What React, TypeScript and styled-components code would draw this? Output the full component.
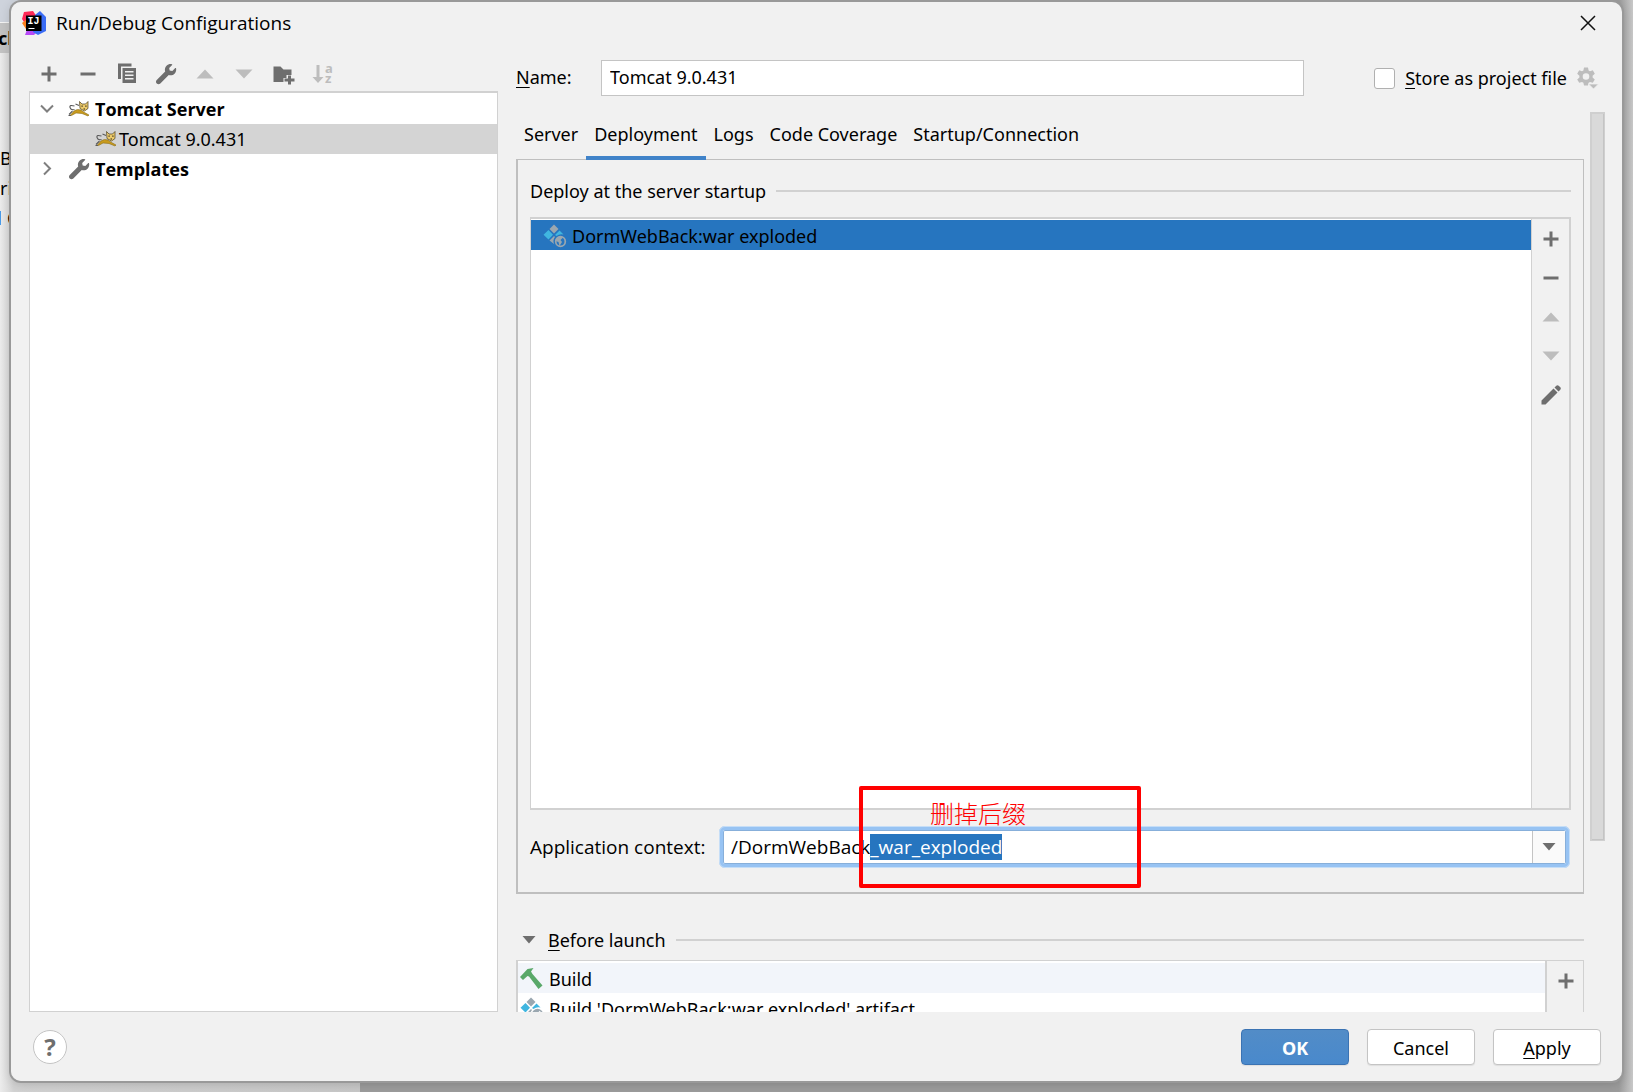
import React, { useEffect, useRef, useState } from 'react';
import styled, { createGlobalStyle, css } from 'styled-components';

const plainFont = '"Noto Sans", "Noto Sans CJK SC", sans-serif';
const headFont = '"Open Sans", "Noto Sans CJK SC", sans-serif';

const GlobalStyle = createGlobalStyle`
  *, *::before, *::after { box-sizing: border-box; }
  body {
    margin: 0;
    background: #929292;
    color: #000;
    font: 18px/30px ${plainFont};
  }
  button, input { font: inherit; color: inherit; }
  button { padding: 0; border: 0; background: none; cursor: pointer; }
  h1, h2 { margin: 0; font: inherit; }
  ul { margin: 0; padding: 0; list-style: none; }
  u { text-decoration-thickness: 1px; text-underline-offset: 3px; }
`;

const line = '#d1d1d1';
const ink = '#6e6e6e';
const faded = '#bdbdbd';
const accent = '#2675bf';

const Desktop = styled.div`
  position: relative;
  display: flex;
  min-height: 100vh;
  overflow: hidden;
  background: linear-gradient(90deg, #9c9c9c calc(100% - 14px), #c8c8c8);
`;

const ProjectWindow = styled.div`
  width: 360px;
  background: linear-gradient(90deg, #ececec, #d2d2d2 14px, #c8c8c8);
`;

const ProjectHeader = styled.div`
  height: 23px;
  background: #ced3dc;
  border-bottom: 1px solid #f4f4f4;
`;

const ProjectLine = styled.div<{ $active?: boolean; $marked?: boolean; $gap?: number }>`
  display: flex;
  height: 30px;
  margin-top: ${(p) => p.$gap ?? 0}px;
  gap: 6px;
  ${(p) => p.$active && css`background: #c3c3c3; font-weight: 700; text-indent: -2px;`}
  ${(p) => p.$marked && css`&::before { content: ''; width: 1px; height: 14px; margin-top: 8px; background: #4a9be8; }`}
`;

const Dialog = styled.main`
  position: absolute;
  inset: 2px 11px 11px;
  display: flex;
  flex-direction: column;
  overflow: hidden;
  border-radius: 10px;
  background: #f1f1f1;
`;

const DialogShadow = styled.div`
  position: absolute;
  inset: 2px 11px 11px;
  border-radius: 10px;
  box-shadow: 0 0 0 2px #999, 0 2px 12px rgba(0, 0, 0, 0.2);
`;

const TitleBar = styled.header`
  display: flex;
  align-items: center;
  height: 42px;
  padding: 0 22px 0 11px;
  gap: 10px;
  font-family: ${headFont};
  font-size: 19px;
  h1 { flex: 1; }
`;

const Body = styled.div`
  display: grid;
  grid-template-columns: 469px minmax(0, 1fr);
  grid-template-rows: minmax(0, 1fr);
  gap: 18px;
  flex: 1;
  min-height: 0;
  padding: 14px 17px 0 18px;
`;

const Column = styled.section`
  display: flex;
  flex-direction: column;
  min-height: 0;
`;

const Toolbar = styled.div`
  display: flex;
  align-items: center;
  gap: 15px;
  height: 33px;
  padding: 0 0 2px 8px;
`;

const IconButton = styled.button`
  display: flex;
  align-items: center;
  justify-content: center;
  width: 24px;
  height: 24px;
  flex: none;
`;

const Tree = styled.ul`
  flex: 1;
  padding-top: 1px;
  border: 1px solid ${line};
  border-top-width: 2px;
  background: #fff;
`;

const TreeRow = styled.li<{ $group?: boolean; $selected?: boolean }>`
  display: flex;
  align-items: center;
  height: 30px;
  padding-left: ${(p) => (p.$group ? 5 : 64)}px;
  gap: ${(p) => (p.$group ? 4 : 1)}px;
  font-family: ${(p) => (p.$group ? headFont : plainFont)};
  font-weight: ${(p) => (p.$group ? 700 : 400)};
  background: ${(p) => (p.$selected ? '#d4d4d4' : 'transparent')};
  button { margin-right: 4px; }
`;

const NameRow = styled.div`
  display: flex;
  align-items: center;
  height: 36px;
  margin: 2px 5px 16px 0;
`;

const NameLabel = styled.label`
  width: 85px;
  padding-bottom: 2px;
`;

const NameInput = styled.input`
  flex: 1;
  min-width: 0;
  height: 36px;
  margin-right: 70px;
  padding: 0 8px 2px;
  border: 1px solid #c4c4c4;
  background: #fff;
`;

const StoreLabel = styled.label`
  display: flex;
  align-items: center;
  gap: 10px;
  margin-right: 9px;
`;

const CheckBox = styled.input`
  appearance: none;
  width: 21px;
  height: 21px;
  margin: 0;
  border: 1px solid #b0b0b0;
  border-radius: 3px;
  background: #fff;
`;

const ScrollPane = styled.div`
  display: grid;
  grid-template-columns: minmax(0, 1fr) 15px;
  grid-template-rows: minmax(0, 1fr);
  gap: 6px;
  flex: 1;
  min-height: 0;
  overflow: hidden;
`;

const ScrollThumb = styled.div`
  height: 81%;
  border: 1px solid #cfcfcf;
  border-width: 2px 1px 1px 2px;
  box-shadow: inset -1px -1px #c4c4c4;
  background: #d9d9d9;
`;

const Tabs = styled.div`
  position: relative;
  display: flex;
  margin-bottom: -1px;
`;

const Tab = styled.button<{ $active: boolean }>`
  height: 48px;
  padding: 0 8px;
  border-bottom: 4px solid ${(p) => (p.$active ? '#4083c9' : 'transparent')};
`;

const Pane = styled.div`
  padding: 16px 12px 24px;
  border: 1px solid #bfbfbf;
  border-left-width: 2px;
  border-bottom-width: 2px;
`;

const SectionHead = styled.div<{ $top?: number }>`
  display: flex;
  align-items: center;
  height: 30px;
  margin-top: ${(p) => p.$top ?? 0}px;
  gap: 10px;
  &::after { content: ''; flex: 1; height: 2px; background: ${line}; }
`;

const DeployBox = styled.div`
  display: flex;
  height: 593px;
  margin-top: 11px;
  border: 2px solid ${line};
  border-left-width: 1px;
`;

const List = styled.ul`
  flex: 1;
  padding-top: 1px;
  background: #fff;
`;

const ListRow = styled.li<{ $tone?: string; $inset?: number }>`
  display: flex;
  align-items: center;
  height: 30px;
  padding: 2px 0 0 ${(p) => p.$inset ?? 12}px;
  gap: 5px;
  background: ${(p) => p.$tone ?? 'transparent'};
`;

const SideBar = styled.div<{ $ruled?: boolean }>`
  display: flex;
  flex-direction: column;
  align-items: center;
  gap: 15px;
  width: ${(p) => (p.$ruled ? 38 : 36)}px;
  padding: 8px 0 0 1px;
  border-left: ${(p) => (p.$ruled ? 1 : 0)}px solid ${line};
`;

const ContextRow = styled.div`
  display: flex;
  align-items: center;
  margin-top: 16px;
  font-family: ${headFont};
  font-size: 19px;
`;

const ContextLabel = styled.label`
  width: 189px;
`;

const Combo = styled.div`
  position: relative;
  display: flex;
  flex: 1;
  height: 42px;
  margin-right: 1px;
  border: 4px solid #97c3f3;
  border-radius: 6px;
  outline: 1px solid #c6def7;
  outline-offset: -1px;
  background: #fff;
  box-shadow: inset 0 0 0 1px #87afda;
`;

const ComboInput = styled.input`
  flex: 1;
  min-width: 0;
  margin: 1px 0;
  padding: 0 8px;
  border: 0;
  outline: 0;
  background: none;
  line-height: 26px;
  &::selection { background: ${accent}; color: #fff; }
`;

const ComboArrow = styled.button`
  display: flex;
  align-items: center;
  justify-content: center;
  width: 33px;
  margin: 1px;
  border-left: 1px solid #c4c4c4;
  background: #fafafa;
`;

const Callout = styled.div`
  position: absolute;
  top: -44px;
  left: 136px;
  width: 282px;
  height: 102px;
  padding: 5px 0 0 67px;
  border: 4px solid #ff0000;
  border-radius: 2px;
  color: #ff0000;
  font: 300 24px/36px "Noto Sans CJK SC", sans-serif;
  pointer-events: none;
`;

const Disclosure = styled.button`
  display: flex;
  align-items: center;
  gap: 7px;
  padding-left: 1px;
`;

const LaunchBox = styled.div`
  display: flex;
  height: 150px;
  margin-top: 5px;
  border: 1px solid ${line};
  border-left-width: 2px;
`;

const LaunchList = styled(List)`
  padding-top: 2px;
  border-right: 2px solid ${line};
`;

const Footer = styled.footer`
  display: flex;
  align-items: center;
  gap: 18px;
  height: 69px;
  padding: 0 21px 0 22px;
`;

const HelpButton = styled.button`
  width: 34px;
  height: 34px;
  margin-right: auto;
  border: 1px solid #c4c4c4;
  border-radius: 50%;
  background: #fff;
  color: ${ink};
  font-size: 24px;
  font-weight: 700;
`;

const ActionButton = styled.button<{ $primary?: boolean }>`
  width: 108px;
  height: 36px;
  padding-top: 2px;
  border: 1px solid #c4c4c4;
  border-radius: 4px;
  background: #fff;
  box-shadow: 0 1px 1px rgba(0, 0, 0, 0.08);
  ${(p) => p.$primary && css`
    border-color: #3b73b3;
    background: linear-gradient(#528cc7, #4989cc);
    color: #fff;
    font-weight: 700;
  `}
`;

const wrench =
  'M507.73 109.1c-2.24-9.03-13.54-12.09-20.12-5.51l-74.36 74.36-67.88-11.31-11.31-67.88 74.36-74.36c6.62-6.62 3.43-17.9-5.66-20.16-47.38-11.74-99.55.91-136.58 37.93-39.64 39.64-50.55 97.1-34.05 147.2L18.74 402.76c-24.99 24.99-24.99 65.51 0 90.5 24.99 24.99 65.51 24.99 90.5 0l213.21-213.21c50.12 16.71 107.47 5.68 147.37-34.22 37.07-37.07 49.7-89.32 37.91-136.73z';

const glyphs = {
  add: <path fill={ink} d="M10.5 4.5h3v6h6v3h-6v6h-3v-6h-6v-3h6z" />,
  remove: <path fill={ink} d="M4.5 10.5h15v3h-15z" />,
  copy: (
    <>
      <path fill={ink} d="M3 1.5h13.5v3H6V17H3z" />
      <path fill={ink} fillRule="evenodd" d="M7.5 6H21v15H7.5zM10 9v1.500h8.500V9zM10 12.500V14h8.500v-1.500zM10 16v1.500h8.500V16z" />
    </>
  ),
  wrench: <path fill={ink} transform="translate(2 2) scale(.0395)" d={wrench} />,
  up: <path fill={faded} d="M12 7.500 20.500 16.500h-17z" />,
  down: <path fill={faded} d="M3.500 7.500h17L12 16.500z" />,
  folder: (
    <>
      <path fill={ink} d="M2.500 4.500h7l3 3h8V13h-5v3h-3v4h-10z" />
      <path fill={ink} d="M17 13.500h3v3h3.500v3H20v3h-3v-3h-3.500v-3H17z" />
    </>
  ),
  sort: (
    <>
      <path fill={faded} d="M6.500 3h3v12h4L8 21l-5.500-6h4z" />
      <text x="15" y="11" fill={faded} fontSize="13" fontWeight="700">a</text>
      <text x="15" y="21" fill={faded} fontSize="13" fontWeight="700">z</text>
    </>
  ),
  pencil: <path fill={ink} d="m15.500 4.500 1.800-1.800c.7-.7 1.700-.7 2.400 0l1.600 1.600c.7.7.7 1.700 0 2.400l-1.800 1.800zM14.500 5.500l4 4L6.500 21.500H2.500v-4z" />,
  hammer: <path fill="#59a869" d="M0 10 7.500 2l6-1-2.500 3.500 1.500 2.500L22.500 18.500 18.500 22 9 9.500l-1.500-.5L3 13z" />,
  artifact: (
    <>
      <path fill="#9aa7b0" d="m11 .5 4.500 4.500L11 9.500 6.500 5z" />
      <path fill="#40b6e0" d="m5.500 6 4.500 4.800-4.500 4.700L.5 10.800zM16.500 6.500 20.500 10.500q-4-1-7 1.500l-1.500-1z" />
      <path fill="#9aa7b0" d="m11 12 1 1q-2.500 3-1 7L6.500 16.500z" />
      <circle cx="17.500" cy="17.500" r="4.800" fill="none" stroke="#9aa7b0" strokeWidth="1.700" />
      <path fill="#9aa7b0" d="M13 15q4-4 7-1.500l-2.500 2.500 1.500 2-2.500 4-1-4-3-1z" />
    </>
  ),
  tomcat: (
    <>
      <path fill="none" stroke="#5a5a5a" strokeWidth="1.100" d="M2 17.500 5.500 14M7.500 9Q2 7.500 3 10.500t4.500 2M12 8.500 8.500 7M1.500 18.500h2.500" />
      <path fill="#c99b1d" stroke="#8a6c14" strokeWidth=".6" d="M3.500 18 7 14Q10 11.500 14 13l3.500 2.500 4.500 2.500-1 1-6-2.500L9 16l-4.500 2.500z" />
      <path fill="#edcb6b" stroke="#4a3d1c" strokeWidth=".7" d="m12.500 4.500 2.500 2.500h3.500L21 4.500v7L17.500 14 13 11.500z" />
      <path fill="#2c2718" d="M14.500 8.500h1.200v1.200h-1.200zM18.300 8.500h1.200v1.200h-1.200zM16.500 11.500h1.500v1h-1.500z" />
    </>
  ),
  chevronDown: <path fill="none" stroke="#7f7f7f" strokeWidth="2" d="m6 8.500 6 6 6-6" />,
  chevronRight: <path fill="none" stroke="#7f7f7f" strokeWidth="2" d="m9 5.500 6 6-6 6" />,
  close: <path fill="none" stroke="#111" strokeWidth="1.500" d="m5 5 14 14M19 5 5 19" />,
  gear: (
    <>
      <path
        fill={faded}
        fillRule="evenodd"
        d="M8 1.500h4l.6 2.900 1.400.8 2.800-.9 2 3.400-2.200 2v1.700l2.200 2-2 3.400-2.800-.9-1.400.8L12 19.500H8l-.6-2.800-1.400-.8-2.800.9-2-3.400 2.200-2V9.700l-2.200-2 2-3.400 2.800.9 1.400-.8zM10 7.200a3.300 3.300 0 1 0 0 6.600 3.300 3.300 0 0 0 0-6.600z"
      />
      <path fill={faded} stroke="#f1f1f1" strokeWidth=".8" d="M12.500 18h10l-5 5z" />
    </>
  ),
  dropDown: <path fill={ink} d="M5.500 8h13L12 15.500z" />,
  idea: (
    <>
      <path fill="#fe2857" d="M2 1 11 0l4 6L4 14 0 8z" />
      <path fill="#fc801d" d="M0 12l5-4 3 12-4-2z" />
      <path fill="#b74af7" d="M3 24l3-8 10 4-4 4z" />
      <path fill="#3a6cf5" d="m13 4 5-4 6 6v14l-8 4-5-3z" />
      <path fill="#000" d="M4 4.500h15.500V20H4z" />
      <path fill="#fff" d="M6.500 17h6v1h-6z" />
      <text x="5.500" y="13" fill="#fff" fontSize="10" fontWeight="700" fontFamily="Liberation Mono">IJ</text>
    </>
  ),
};

const Svg = styled.svg`
  flex: none;
  display: block;
  overflow: visible;
`;

function Icon({ name, size = 24 }: { name: keyof typeof glyphs; size?: number }) {
  return (
    <Svg width={size} height={size} viewBox="0 0 24 24" aria-hidden="true">
      {glyphs[name]}
    </Svg>
  );
}

type Tool = { icon: keyof typeof glyphs; label: string };

const treeTools: Tool[] = [
  { icon: 'add', label: 'Add New Configuration' },
  { icon: 'remove', label: 'Remove Configuration' },
  { icon: 'copy', label: 'Copy Configuration' },
  { icon: 'wrench', label: 'Edit Templates' },
  { icon: 'up', label: 'Move Up' },
  { icon: 'down', label: 'Move Down' },
  { icon: 'folder', label: 'Create New Folder' },
  { icon: 'sort', label: 'Sort Configurations' },
];

const deployTools: Tool[] = [
  { icon: 'add', label: 'Add' },
  { icon: 'remove', label: 'Remove' },
  { icon: 'up', label: 'Up' },
  { icon: 'down', label: 'Down' },
  { icon: 'pencil', label: 'Edit' },
];

const tabs = ['Server', 'Deployment', 'Logs', 'Code Coverage', 'Startup/Connection'];

function Tools({ items }: { items: Tool[] }) {
  return (
    <>
      {items.map((t) => (
        <IconButton key={t.label} type="button" aria-label={t.label}>
          <Icon name={t.icon} />
        </IconButton>
      ))}
    </>
  );
}

export default function App() {
  const [tab, setTab] = useState('Deployment');
  const context = useRef<HTMLInputElement>(null);

  useEffect(() => {
    const el = context.current;
    if (!el) return;
    el.focus();
    el.setSelectionRange('/DormWebBack'.length, el.value.length);
  }, []);

  return (
    <Desktop>
      <GlobalStyle />
      <ProjectWindow aria-hidden="true">
        <ProjectHeader />
        <ProjectLine $active>cl</ProjectLine>
        <ProjectLine $gap={90}>B</ProjectLine>
        <ProjectLine>ri</ProjectLine>
        <ProjectLine $marked>C</ProjectLine>
      </ProjectWindow>
      <DialogShadow />
      <Dialog>
        <TitleBar>
          <Icon name="idea" />
          <h1>Run/Debug Configurations</h1>
          <IconButton type="button" aria-label="Close">
            <Icon name="close" />
          </IconButton>
        </TitleBar>

        <Body>
          <Column>
            <Toolbar>
              <Tools items={treeTools} />
            </Toolbar>
            <Tree>
              <TreeRow $group>
                <IconButton type="button" aria-label="Collapse Tomcat Server">
                  <Icon name="chevronDown" />
                </IconButton>
                <Icon name="tomcat" />
                Tomcat Server
              </TreeRow>
              <TreeRow $selected>
                <Icon name="tomcat" />
                Tomcat 9.0.431
              </TreeRow>
              <TreeRow $group>
                <IconButton type="button" aria-label="Expand Templates">
                  <Icon name="chevronRight" />
                </IconButton>
                <Icon name="wrench" />
                Templates
              </TreeRow>
            </Tree>
          </Column>

          <Column>
            <NameRow>
              <NameLabel htmlFor="config-name"><u>N</u>ame:</NameLabel>
              <NameInput id="config-name" defaultValue="Tomcat 9.0.431" />
              <StoreLabel>
                <CheckBox type="checkbox" />
                <span><u>S</u>tore as project file</span>
              </StoreLabel>
              <IconButton type="button" aria-label="Storage options">
                <Icon name="gear" />
              </IconButton>
            </NameRow>

            <ScrollPane>
              <div>
                <Tabs role="tablist">
                  {tabs.map((t) => (
                    <Tab key={t} type="button" role="tab" aria-selected={t === tab} $active={t === tab} onClick={() => setTab(t)}>
                      {t}
                    </Tab>
                  ))}
                </Tabs>
                <Pane>
                  <SectionHead><h2>Deploy at the server startup</h2></SectionHead>
                  <DeployBox>
                    <List>
                      <ListRow $tone={accent}>
                        <Icon name="artifact" />
                        DormWebBack:war exploded
                      </ListRow>
                    </List>
                    <SideBar $ruled>
                      <Tools items={deployTools} />
                    </SideBar>
                  </DeployBox>
                  <ContextRow>
                    <ContextLabel htmlFor="app-context">Application context:</ContextLabel>
                    <Combo>
                      <ComboInput id="app-context" ref={context} spellCheck={false} defaultValue="/DormWebBack_war_exploded" />
                      <ComboArrow type="button" aria-label="Show contexts">
                        <Icon name="dropDown" />
                      </ComboArrow>
                      <Callout>删掉后缀</Callout>
                    </Combo>
                  </ContextRow>
                </Pane>

                <SectionHead $top={31}>
                  <Disclosure type="button" aria-expanded="true">
                    <Icon name="dropDown" />
                    <span><u>B</u>efore launch</span>
                  </Disclosure>
                </SectionHead>
                <LaunchBox>
                  <LaunchList>
                    <ListRow $tone="#f2f5fa" $inset={2}>
                      <Icon name="hammer" />
                      Build
                    </ListRow>
                    <ListRow $inset={2}>
                      <Icon name="artifact" />
                      Build 'DormWebBack:war exploded' artifact
                    </ListRow>
                  </LaunchList>
                  <SideBar>
                    <Tools items={deployTools.slice(0, 1)} />
                  </SideBar>
                </LaunchBox>
              </div>
              <ScrollThumb />
            </ScrollPane>
          </Column>
        </Body>

        <Footer>
          <HelpButton type="button" aria-label="Help">?</HelpButton>
          <ActionButton type="button" $primary>OK</ActionButton>
          <ActionButton type="button">Cancel</ActionButton>
          <ActionButton type="button"><u>A</u>pply</ActionButton>
        </Footer>
      </Dialog>
    </Desktop>
  );
}
